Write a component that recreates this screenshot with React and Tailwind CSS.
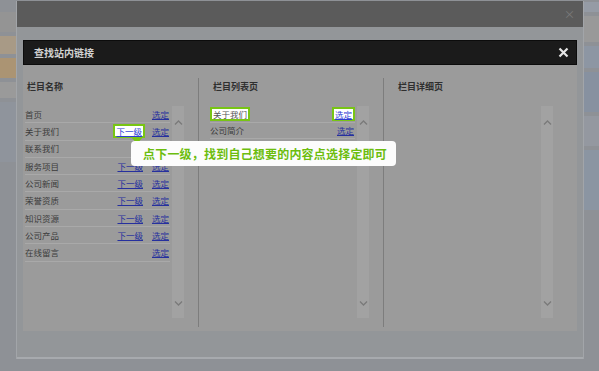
import React from "react";

const font = { fontFamily: '"Noto Sans CJK SC", "Noto Sans", sans-serif' };

const leftItems = [
  { name: "首页", next: false },
  { name: "关于我们", next: true, hot: true },
  { name: "联系我们", next: false, hidden: true },
  { name: "服务项目", next: true },
  { name: "公司新闻", next: true },
  { name: "荣誉资质", next: true },
  { name: "知识资源", next: true },
  { name: "公司产品", next: true },
  { name: "在线留言", next: false },
];

const midItems = ["关于我们", "公司简介", "企业荣誉"];

function Scrollbar() {
  return (
    <div className="w-[12px] h-[212px] bg-[#a2a2a2] flex flex-col items-center justify-between pt-[14px] pb-[12px]">
      <svg width="9" height="5" viewBox="0 0 9 5">
        <path d="M1 4.5 L4.5 1 L8 4.5" fill="none" stroke="#7a7a7a" strokeWidth="1.3" />
      </svg>
      <svg width="9" height="5" viewBox="0 0 9 5">
        <path d="M1 0.5 L4.5 4 L8 0.5" fill="none" stroke="#7a7a7a" strokeWidth="1.3" />
      </svg>
    </div>
  );
}

function Heading({ children }) {
  return (
    <div className="h-[41px] pt-[16px] text-[9px] leading-[11px] font-bold text-[#2f2f2f]">
      {children}
    </div>
  );
}

export default function App() {
  return (
    <div className="relative w-[599px] h-[371px] overflow-hidden bg-[#8e9196] flex" style={font}>
      {/* dimmed page behind, left edge */}
      <div className="w-[16px] flex flex-col pt-[12px] gap-[4px]">
        <div className="h-[20px] bg-[#949494]" />
        <div className="h-[18px] bg-[#a89a86]" />
        <div className="h-[20px] bg-[#ab9473]" />
        <div className="h-[16px] bg-[#9a9a9a]" />
        <div className="h-[60px] bg-[#8f949c]" />
      </div>

      {/* outer window */}
      <div className="w-[568px] h-[358px] mt-[1px] flex flex-col bg-[#939699] border-x border-[#a2a5a9]">
        <div className="h-[26px] bg-[#5b5b5b] flex items-center justify-end pr-[8px]">
          <span className="text-[11px] leading-none text-[#7b7b7b]">×</span>
        </div>

        {/* inner dialog */}
        <div className="mt-[13px] mx-[6px] flex flex-col">
          <div className="h-[25px] bg-[#1b1b1b] border border-[#0c0c0c] flex items-center justify-between pl-[10px] pr-[7px]">
            <span className="text-[10px] font-bold text-[#d2d2d2]">查找站内链接</span>
            <svg width="11" height="11" viewBox="0 0 11 11">
              <path d="M1.5 1.5 L9.5 9.5 M9.5 1.5 L1.5 9.5" stroke="#e6e6e6" strokeWidth="2.2" />
            </svg>
          </div>

          <div className="h-[266px] bg-[#9b9b9b] flex">
            {/* column 1 */}
            <div className="w-[175px] flex flex-col pl-[2px]">
              <div className="pl-[2px]">
                <Heading>栏目名称</Heading>
              </div>
              <div className="flex gap-[2px]">
                <div className="w-[145px] flex flex-col">
                  {leftItems.map((it) => (
                    <div
                      key={it.name}
                      className="h-[17.3px] border-b border-[#a9a9a9] flex items-center text-[8.5px] text-[#3c3c3c]"
                    >
                      <span className="flex-1">{it.name}</span>
                      {it.next &&
                        (it.hot ? (
                          <span className="mr-[7px] px-[1px] bg-white border-2 border-[#78c514] text-[#2d3cd4] underline leading-[10px]">
                            下一级
                          </span>
                        ) : (
                          <span className="mr-[9px] text-[#26309e] underline">下一级</span>
                        ))}
                      <span className="mr-[1px] text-[#26309e] underline">选定</span>
                    </div>
                  ))}
                </div>
                <Scrollbar />
              </div>
            </div>

            <div className="w-px mt-[13px] mb-[4px] bg-[#7d7d7d]" />

            {/* column 2 */}
            <div className="w-[184px] flex flex-col pl-[11px]">
              <div className="pl-[3px]">
                <Heading>栏目列表页</Heading>
              </div>
              <div className="flex gap-[2px]">
                <div className="w-[145px] flex flex-col">
                  {midItems.map((name, i) => (
                    <div
                      key={name}
                      className="h-[16.5px] border-b border-[#a9a9a9] flex items-center justify-between text-[8.5px] text-[#3c3c3c]"
                    >
                      {i === 0 ? (
                        <>
                          <span className="bg-white border-2 border-[#78c514] text-[#555] leading-[10px] px-[1px]">
                            {name}
                          </span>
                          <span className="bg-white border-2 border-[#78c514] text-[#2d3cd4] underline leading-[10px] px-[1px]">
                            选定
                          </span>
                        </>
                      ) : (
                        <>
                          <span>{name}</span>
                          <span className="mr-[1px] text-[#26309e] underline">选定</span>
                        </>
                      )}
                    </div>
                  ))}
                </div>
                <Scrollbar />
              </div>
            </div>

            <div className="w-px mt-[13px] mb-[4px] bg-[#7d7d7d]" />

            {/* column 3 */}
            <div className="flex-1 flex flex-col pl-[14px]">
              <Heading>栏目详细页</Heading>
              <div className="flex pl-[143px]">
                <Scrollbar />
              </div>
            </div>
          </div>
        </div>
        <div className="flex-1" />
        <div className="h-[2px] bg-[#a7aaae]" />
      </div>

      {/* dimmed page behind, right edge */}
      <div className="flex-1 flex flex-col gap-[4px] pt-[2px]">
        <div className="h-[10px] bg-[#959ba5]" />
        <div className="h-[26px] bg-[#999999]" />
        <div className="h-[22px] bg-[#8d96a3]" />
        <div className="h-[40px] bg-[#8791a0]" />
        <div className="h-[30px] bg-[#9498a0]" />
        <div className="h-[60px] bg-[#8b95a2]" />
      </div>

      {/* tooltip */}
      <div className="absolute left-[132px] top-[138px] w-0 h-0 border-x-[5px] border-x-transparent border-t-[6px] border-t-[#78c514]" />
      <div className="absolute left-[131px] top-[141px] w-[265px] h-[25px] rounded-[4px] bg-[#fcfcfc] flex items-center pl-[12px]">
        <span className="text-[12px] font-bold text-[#6cbd0e] tracking-[0.2px]">
          点下一级，找到自己想要的内容点选择定即可
        </span>
      </div>
    </div>
  );
}
